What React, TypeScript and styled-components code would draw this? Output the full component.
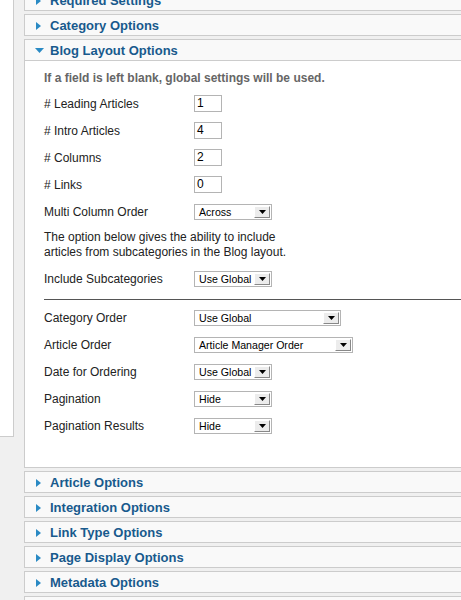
import styled, { createGlobalStyle } from 'styled-components'

const GlobalStyle = createGlobalStyle`
  html, body {
    margin: 0;
    padding: 0;
    background: #f0f0f0;
    font-family: "Liberation Sans", Arial, sans-serif;
    overflow: hidden;
  }
`

const Page = styled.div`
  display: flex;
  gap: 10px;
  width: 461px;
  height: 600px;
  overflow: hidden;
`

const SideBox = styled.div`
  flex: none;
  width: 13px;
  height: 436px;
  background: #fff;
  border-right: 1px solid #ccc;
  border-bottom: 1px solid #ccc;
`

const Panes = styled.div`
  flex: none;
  width: 480px;
  margin-top: -11px;
  display: flex;
  flex-direction: column;
`

const Pane = styled.div`
  border: 1px solid #ccc;
  margin-bottom: 3px;
  background: #fff;
`

const Toggler = styled.div<{ $open?: boolean }>`
  display: flex;
  align-items: center;
  height: 19px;
  padding: 1px 0 0 11px;
  background: #f9f9f9;
  border-bottom: ${p => (p.$open ? '1px solid #ccc' : 'none')};
  color: #185a8d;
  font-size: 13px;
  font-weight: bold;
`

const Arrow = styled.span`
  display: flex;
  align-items: center;
  width: 14px;
  height: 19px;
`

const Content = styled.div`
  padding: 10px 0 28px 19px;
  color: #333;
  font-size: 12px;
`

const Note = styled.div`
  line-height: 15px;
  font-weight: bold;
  color: #666;
  margin-bottom: 4px;
`

const Para = styled.div`
  line-height: 15px;
  color: #222;
  margin: 5px 0;
`

const Row = styled.div`
  display: flex;
  align-items: center;
  height: 27px;
  color: #222;
`

const Label = styled.span`
  flex: none;
  width: 150px;
`

const Rule = styled.div`
  height: 0;
  border-top: 1px solid #555;
  margin: 7px 0 4px;
`

const TextInput = styled.div`
  box-sizing: border-box;
  width: 28px;
  height: 17px;
  border: 1px solid #b4b4b4;
  padding-left: 2px;
  line-height: 15px;
  font-size: 12px;
  color: #000;
  background: #fff;
`

const Select = styled.div<{ $w: number }>`
  box-sizing: border-box;
  display: flex;
  align-items: center;
  width: ${p => p.$w}px;
  height: 16px;
  border: 1px solid #b4b4b4;
  background: #fff;
  font-size: 10.6px;
  color: #000;
`

const SelectText = styled.span`
  flex: 1;
  padding-left: 4px;
  white-space: nowrap;
  overflow: hidden;
`

const DropButton = styled.span`
  box-sizing: border-box;
  display: flex;
  align-items: flex-end;
  justify-content: center;
  width: 16px;
  height: 12px;
  margin: 0 1px;
  padding-bottom: 3px;
  background: #ececec;
  border-top: 1px solid #fff;
  border-left: 1px solid #fff;
  border-right: 1px solid #888;
  border-bottom: 1px solid #888;
`

function RightArrow () {
  return (
    <svg width="5" height="8" viewBox="0 0 5 8">
      <polygon points="0,0 5,4 0,8" fill="#2a8ac4" />
    </svg>
  )
}

function DownArrow () {
  return (
    <svg width="9" height="5" viewBox="0 0 9 5" style={{ marginLeft: -1 }}>
      <polygon points="0,0 9,0 4.5,5" fill="#2a8ac4" />
    </svg>
  )
}

function Dropdown ({ value, width }: { value: string, width: number }) {
  return (
    <Select $w={width}>
      <SelectText>{value}</SelectText>
      <DropButton>
        <svg width="7" height="4" viewBox="0 0 7 4">
          <polygon points="0,0 7,0 3.5,4" fill="#000" />
        </svg>
      </DropButton>
    </Select>
  )
}

function ClosedPane ({ title }: { title: string }) {
  return (
    <Pane>
      <Toggler>
        <Arrow><RightArrow /></Arrow>
        {title}
      </Toggler>
    </Pane>
  )
}

const counts = [
  ['# Leading Articles', '1'],
  ['# Intro Articles', '4'],
  ['# Columns', '2'],
  ['# Links', '0']
]

const orders: [string, string, number][] = [
  ['Category Order', 'Use Global', 147],
  ['Article Order', 'Article Manager Order', 159],
  ['Date for Ordering', 'Use Global', 78],
  ['Pagination', 'Hide', 78],
  ['Pagination Results', 'Hide', 78]
]

export default function App () {
  return (
    <Page>
      <GlobalStyle />
      <SideBox />
      <Panes>
        <ClosedPane title="Required Settings" />
        <ClosedPane title="Category Options" />
        <Pane>
          <Toggler $open>
            <Arrow><DownArrow /></Arrow>
            Blog Layout Options
          </Toggler>
          <Content>
            <Note>If a field is left blank, global settings will be used.</Note>
            {counts.map(([label, value]) => (
              <Row key={label}>
                <Label>{label}</Label>
                <TextInput>{value}</TextInput>
              </Row>
            ))}
            <Row>
              <Label>Multi Column Order</Label>
              <Dropdown value="Across" width={78} />
            </Row>
            <Para>
              The option below gives the ability to include<br />
              articles from subcategories in the Blog layout.
            </Para>
            <Row>
              <Label>Include Subcategories</Label>
              <Dropdown value="Use Global" width={78} />
            </Row>
            <Rule />
            {orders.map(([label, value, w]) => (
              <Row key={label}>
                <Label>{label}</Label>
                <Dropdown value={value} width={w} />
              </Row>
            ))}
          </Content>
        </Pane>
        <ClosedPane title="Article Options" />
        <ClosedPane title="Integration Options" />
        <ClosedPane title="Link Type Options" />
        <ClosedPane title="Page Display Options" />
        <ClosedPane title="Metadata Options" />
        <ClosedPane title="Other Options" />
      </Panes>
    </Page>
  )
}
